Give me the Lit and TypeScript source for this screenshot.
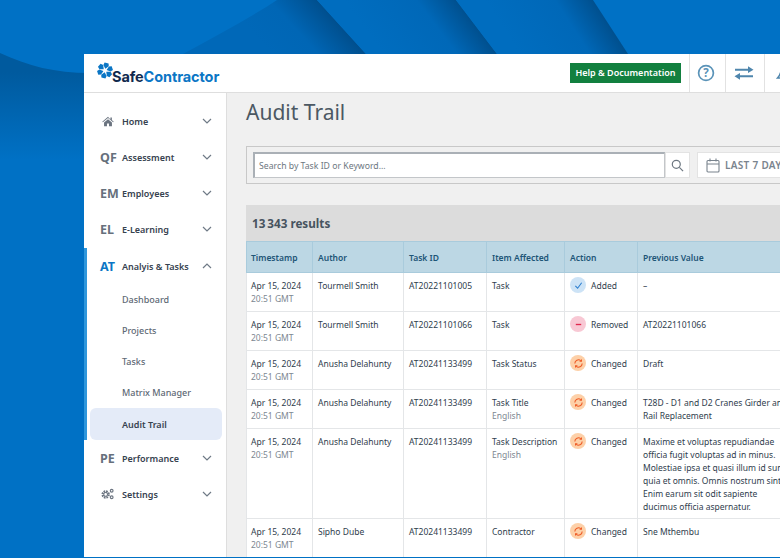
import { LitElement, css, html, svg } from "lit";
import { customElement } from "lit/decorators.js";

const chevron = (up = false) => html`<svg class="chev" viewBox="0 0 10 6" width="10" height="6">
  <path d=${up ? "M1 5l4-4 4 4" : "M1 1l4 4 4-4"} fill="none" stroke="#6f7a86" stroke-width="1.2" />
</svg>`;

const homeIcon = html`<svg viewBox="0 0 14 12" width="12" height="11">
  <path fill="#6b7480" d="M7 .5L.3 6.2l.7.8L7 2l6 5 .7-.8-2.2-1.9V1.4H9.800v2.300zM2.400 7.300V11.500h3.400V8.200h2.400v3.300h3.400V7.300L7 3.400z" />
</svg>`;

const gearIcon = html`<svg viewBox="0 0 14 12" width="13" height="12" fill="none" stroke="#6b7480">
  <circle cx="5" cy="6.500" r="3.300" stroke-width="2.400" stroke-dasharray="1.700 .9" />
  <circle cx="5" cy="6.500" r="2" stroke-width="1.100" />
  <circle cx="11.500" cy="2.500" r="1.500" stroke-width="1.200" />
  <circle cx="11.500" cy="9.500" r="1.500" stroke-width="1.200" />
</svg>`;

const logoMark = html`<svg viewBox="0 0 16 16" width="16" height="17" fill="#0b76c5">
  ${[0, 60, 120, 180, 240, 300].map(
    (a) => svg`<path transform="rotate(${a + 12} 8 8)" d="M8 6.300L5.300 3 6 .3h4l.8 2.700z" />`
  )}
</svg>`;

const refreshIcon = html`<svg viewBox="0 0 12 12" width="11" height="11" fill="none" stroke="#ee5a24" stroke-width="1.200">
  <path d="M2 6a4 4 0 0 1 6.500-3.100" />
  <path d="M10 6a4 4 0 0 1-6.500 3.100" />
  <path fill="#ee5a24" stroke="none" d="M9.800 1.200v3H6.800zM2.200 10.800v-3h3z" />
</svg>`;

type Row = {
  date: string;
  author: string;
  id: string;
  item: string;
  sub?: string;
  action: "Added" | "Removed" | "Changed";
  prev: string[];
};

const rows: Row[] = [
  { date: "Apr 15, 2024", author: "Tourmell Smith", id: "AT20221101005", item: "Task", action: "Added", prev: ["–"] },
  { date: "Apr 15, 2024", author: "Tourmell Smith", id: "AT20221101066", item: "Task", action: "Removed", prev: ["AT20221101066"] },
  { date: "Apr 15, 2024", author: "Anusha Delahunty", id: "AT20241133499", item: "Task Status", action: "Changed", prev: ["Draft"] },
  {
    date: "Apr 15, 2024",
    author: "Anusha Delahunty",
    id: "AT20241133499",
    item: "Task Title",
    sub: "English",
    action: "Changed",
    prev: ["T28D - D1 and D2 Cranes Girder and", "Rail Replacement"],
  },
  {
    date: "Apr 15, 2024",
    author: "Anusha Delahunty",
    id: "AT20241133499",
    item: "Task Description",
    sub: "English",
    action: "Changed",
    prev: [
      "Maxime et voluptas repudiandae",
      "officia fugit voluptas ad in minus.",
      "Molestiae ipsa et quasi illum id sunt",
      "quia et omnis. Omnis nostrum sint",
      "Enim earum sit odit sapiente",
      "ducimus officia aspernatur.",
    ],
  },
  { date: "Apr 15, 2024", author: "Sipho Dube", id: "AT20241133499", item: "Contractor", action: "Changed", prev: ["Sne Mthembu"] },
];

@customElement("app-root")
export class AppRoot extends LitElement {
  static styles = css`
    :host {
      display: block;
      position: relative;
      width: 780px;
      height: 558px;
      overflow: hidden;
      background: #0071c5;
      font-family: "Noto Sans", "Open Sans", sans-serif;
      color: #2c3a4a;
    }
    .bg {
      position: absolute;
      inset: 0;
    }
    .window {
      position: absolute;
      left: 84px;
      top: 54px;
      width: 760px;
      height: 503px;
      display: flex;
      flex-direction: column;
      background: #f0f0f0;
    }
    .topbar {
      height: 39px;
      box-sizing: border-box;
      flex: none;
      display: flex;
      align-items: stretch;
      background: #fff;
      border-bottom: 1px solid #dedede;
    }
    .logo {
      display: flex;
      align-items: flex-start;
      padding: 8px 0 0 13px;
      width: 486px;
      box-sizing: border-box;
    }
    .logo-text {
      font-family: "Inter", "Noto Sans", sans-serif;
      font-weight: 700;
      font-size: 14.500px;
      line-height: 15px;
      margin: 7px 0 0 -1px;
      color: #10294d;
      letter-spacing: -0.1px;
    }
    .logo-text span {
      color: #0b76c5;
    }
    .help-wrap {
      display: flex;
      align-items: center;
      width: 119px;
    }
    .help {
      background: #12803f;
      color: #fff;
      font-size: 9px;
      font-weight: 600;
      height: 20px;
      line-height: 20px;
      width: 111px;
      text-align: center;
    }
    .tool {
      box-sizing: border-box;
      border-left: 1px solid #e2e2e2;
      display: flex;
      align-items: center;
      justify-content: center;
    }
    .tool.help-ic {
      width: 36px;
      padding-right: 3px;
    }
    .tool.swap {
      width: 39px;
      padding-right: 2px;
    }
    .tool.bell {
      width: 40px;
      justify-content: flex-start;
      padding-left: 11px;
    }
    .body {
      flex: 1;
      display: flex;
      min-height: 0;
    }
    .side {
      width: 142px;
      flex: none;
      background: #fff;
      border-right: 1px solid #dedede;
      padding-top: 10px;
    }
    .nav {
      display: flex;
      align-items: center;
      height: 36px;
      padding-left: 12px;
      padding-right: 14px;
      font-size: 9px;
      font-weight: 600;
      color: #36424f;
    }
    .nav .ic {
      width: 26px;
      flex: none;
      font-size: 12.500px;
      font-weight: 700;
      color: #66707c;
      padding-left: 4px;
      box-sizing: border-box;
      display: flex;
    }
    .nav .ic.home {
      padding-left: 6px;
    }
    .nav .ic.gear {
      padding-left: 5px;
    }
    .nav .label {
      flex: 1;
    }
    .chev {
      flex: none;
    }
    .group {
      margin-top: 1px;
      border-left: 3px solid #2f97dc;
    }
    .group .nav {
      padding-left: 9px;
    }
    .group .ic {
      color: #0b76c5;
    }
    .sub {
      height: 31px;
      display: flex;
      align-items: center;
      padding-left: 35px;
      font-size: 9px;
      font-weight: 500;
      color: #5e6975;
    }
    .sub.active {
      margin: 0 4px 0 3px;
      padding-left: 32px;
      height: 32px;
      background: #e4ebf8;
      border-radius: 6px;
      color: #36424f;
      font-weight: 600;
    }
    .main {
      flex: 1;
      min-width: 0;
      padding: 4px 0 0 19px;
      overflow: hidden;
    }
    h1 {
      margin: 0 0 19px;
      font-size: 21px;
      line-height: 30px;
      font-weight: 400;
      color: #4c5863;
    }
    .filters {
      display: flex;
      padding: 5px 6px;
      height: 26px;
      width: 600px;
      border: 1px solid #c8c8c8;
      border-right: 0;
    }
    .search {
      width: 412px;
      flex: none;
      box-sizing: border-box;
      height: 26px;
      display: flex;
      background: #fff;
      border: 1px solid #c3c6c9;
      border-top: 2px solid #aab0b6;
      border-left: 2px solid #aab0b6;
      align-items: center;
      padding-left: 4px;
      font-size: 8.700px;
      color: #6d7781;
    }
    .searchbtn {
      width: 25px;
      flex: none;
      height: 26px;
      background: #fff;
      border: 1px solid #e3e3e3;
      box-sizing: border-box;
      display: flex;
      align-items: center;
      justify-content: center;
    }
    .date {
      width: 120px;
      flex: none;
      margin-left: 7px;
      height: 26px;
      background: #fff;
      border: 1px solid #e3e3e3;
      box-sizing: border-box;
      display: flex;
      align-items: center;
      gap: 5px;
      padding-left: 8px;
      font-size: 10px;
      font-weight: 600;
      color: #7a848e;
      letter-spacing: 0.3px;
      white-space: nowrap;
    }
    .results {
      margin-top: 21px;
      width: 560px;
      height: 36px;
      box-sizing: border-box;
      padding-left: 6px;
      display: flex;
      align-items: center;
      background: #dcdcdc;
      font-size: 11.700px;
      font-weight: 700;
      color: #47535f;
    }
    table {
      width: 560px;
      table-layout: fixed;
      border-collapse: collapse;
      background: #fff;
      font-size: 8.500px;
      line-height: 13px;
      color: #2f3d4d;
    }
    th {
      height: 30px;
      padding: 0 0 0 5px;
      text-align: left;
      background: #bcd7e4;
      color: #1d5577;
      font-size: 8.500px;
      font-weight: 600;
      border-left: 1px solid #a9cbdc;
      border-top: 1px solid #a9cbdc;
      border-bottom: 1px solid #a9cbdc;
    }
    td {
      padding: 6px 0 5px 5px;
      vertical-align: top;
      border-left: 1px solid #e4e6e8;
      border-bottom: 1px solid #e4e6e8;
      white-space: nowrap;
      box-sizing: border-box;
    }
    th:first-child,
    td:first-child {
      padding-left: 4px;
    }
    tbody tr {
      height: 39px;
    }
    .muted {
      color: #7d8791;
      display: block;
    }
    .action {
      display: flex;
      align-items: center;
      gap: 5px;
      margin-top: -2px;
    }
    .badge {
      width: 16px;
      height: 16px;
      border-radius: 50%;
      display: flex;
      align-items: center;
      justify-content: center;
      flex: none;
    }
    .Added {
      background: #cde3f6;
    }
    .Removed {
      background: #f8c8d4;
    }
    .Changed {
      background: #fdd0a8;
    }
  `;

  private renderBadge(action: Row["action"]) {
    let icon = refreshIcon;
    if (action === "Added") {
      icon = html`<svg viewBox="0 0 10 10" width="9" height="9"><path d="M1.500 5.500l2.500 2.500 4.500-6" fill="none" stroke="#2d7fd0" stroke-width="1.200" /></svg>`;
    } else if (action === "Removed") {
      icon = html`<svg viewBox="0 0 10 10" width="9" height="9"><path d="M2 5h6" stroke="#e0284f" stroke-width="1.500" /></svg>`;
    }
    return html`<span class="badge ${action}">${icon}</span>`;
  }

  render() {
    return html`
      <svg class="bg" viewBox="0 0 780 558" width="780" height="558">
        <defs>
          <linearGradient id="arc" x1="0" x2="0" y1="0" y2="1">
            <stop offset="0.18" stop-color="#005a9e" />
            <stop offset="1" stop-color="#0071c5" />
          </linearGradient>
          <linearGradient id="b1" gradientUnits="userSpaceOnUse" x1="289" y1="74" x2="341" y2="27">
            <stop offset="0" stop-color="#0068b8" />
            <stop offset="0.5" stop-color="#0066b5" />
            <stop offset="1" stop-color="#004f8e" />
          </linearGradient>
          <linearGradient id="b2" gradientUnits="userSpaceOnUse" x1="404" y1="81" x2="476" y2="27">
            <stop offset="0" stop-color="#006dbf" />
            <stop offset="0.65" stop-color="#0068b8" />
            <stop offset="1" stop-color="#00508f" />
          </linearGradient>
          <linearGradient id="b3" gradientUnits="userSpaceOnUse" x1="534" y1="76" x2="610" y2="27">
            <stop offset="0" stop-color="#006dbf" />
            <stop offset="0.65" stop-color="#0068b8" />
            <stop offset="1" stop-color="#00508f" />
          </linearGradient>
        </defs>
        ${svg`<path fill="url(#arc)" d="M0 53C28 66 55 73 90 73V160H0Z" />
        <path fill="url(#b1)" d="M183 54C215 36 250 18 277 0H317L366 54Z" />
        <path fill="url(#b2)" d="M317 0H456L497 54H366Z" />
        <path fill="url(#b3)" d="M456 0H593L628 54H497Z" />`}
      </svg>
      <div class="window">
        <div class="topbar">
          <div class="logo">
            ${logoMark}
            <div class="logo-text">Safe<span>Contractor</span></div>
          </div>
          <div class="help-wrap"><div class="help">Help &amp; Documentation</div></div>
          <div class="tool help-ic">
            <svg viewBox="0 0 18 18" width="18" height="18">
              <circle cx="9" cy="9" r="7.400" fill="none" stroke="#5a93b8" stroke-width="1.700" />
              <text x="9" y="13" text-anchor="middle" font-size="11.500" font-weight="700" fill="#5a93b8">?</text>
            </svg>
          </div>
          <div class="tool swap">
            <svg viewBox="0 0 20 14" width="20" height="14" fill="#4f86ad">
              <path d="M1 2.700h13V.3L19.500 3.800 14 7V4.800H1z" />
              <path d="M19 9.200H6V7L.5 10.300 6 13.700v-2.400h13z" />
            </svg>
          </div>
          <div class="tool bell">
            <svg viewBox="0 0 18 18" width="18" height="18" fill="none" stroke="#4f86ad" stroke-width="1.500">
              <path d="M9 2C6.500 2 5.500 4 5 7c-.5 3-1.500 5-3.500 7h15c-2-2-3-4-3.500-7C13 4 11.500 2 9 2z" />
            </svg>
          </div>
        </div>
        <div class="body">
          <div class="side">
            <div class="nav"><span class="ic home">${homeIcon}</span><span class="label">Home</span>${chevron()}</div>
            <div class="nav"><span class="ic">QF</span><span class="label">Assessment</span>${chevron()}</div>
            <div class="nav"><span class="ic">EM</span><span class="label">Employees</span>${chevron()}</div>
            <div class="nav"><span class="ic">EL</span><span class="label">E-Learning</span>${chevron()}</div>
            <div class="group">
              <div class="nav"><span class="ic">AT</span><span class="label">Analyis &amp; Tasks</span>${chevron(true)}</div>
              <div class="sub">Dashboard</div>
              <div class="sub">Projects</div>
              <div class="sub">Tasks</div>
              <div class="sub">Matrix Manager</div>
              <div class="sub active">Audit Trail</div>
            </div>
            <div class="nav"><span class="ic">PE</span><span class="label">Performance</span>${chevron()}</div>
            <div class="nav"><span class="ic gear">${gearIcon}</span><span class="label">Settings</span>${chevron()}</div>
          </div>
          <div class="main">
            <h1>Audit Trail</h1>
            <div class="filters">
              <div class="search">Search by Task ID or Keyword...</div>
              <div class="searchbtn">
                <svg viewBox="0 0 14 14" width="13" height="13" fill="none" stroke="#6d7781" stroke-width="1.300">
                  <circle cx="5.700" cy="5.700" r="4.300" />
                  <path d="M9 9l4 4" />
                </svg>
              </div>
              <div class="date">
                <svg viewBox="0 0 14 15" width="14" height="15" fill="none" stroke="#7a848e" stroke-width="1.100">
                  <rect x="1" y="2.500" width="12" height="11.500" rx="1" />
                  <path d="M1 6h12M4 .5v3M10 .5v3" />
                </svg>
                LAST 7 DAYS
              </div>
            </div>
            <div class="results">13&thinsp;343 results</div>
            <table>
              <colgroup>
                <col style="width:66px" />
                <col style="width:91px" />
                <col style="width:83px" />
                <col style="width:78px" />
                <col style="width:73px" />
                <col />
              </colgroup>
              <thead>
                <tr>
                  <th>Timestamp</th>
                  <th>Author</th>
                  <th>Task ID</th>
                  <th>Item Affected</th>
                  <th>Action</th>
                  <th>Previous Value</th>
                </tr>
              </thead>
              <tbody>
                ${rows.map(
                  (r) => html`<tr>
                    <td>${r.date}<span class="muted">20:51 GMT</span></td>
                    <td>${r.author}</td>
                    <td>${r.id}</td>
                    <td>${r.item}${r.sub ? html`<span class="muted">${r.sub}</span>` : ""}</td>
                    <td><div class="action">${this.renderBadge(r.action)}${r.action}</div></td>
                    <td>${r.prev.map((l) => html`<div>${l}</div>`)}</td>
                  </tr>`
                )}
              </tbody>
            </table>
          </div>
        </div>
      </div>
    `;
  }
}
